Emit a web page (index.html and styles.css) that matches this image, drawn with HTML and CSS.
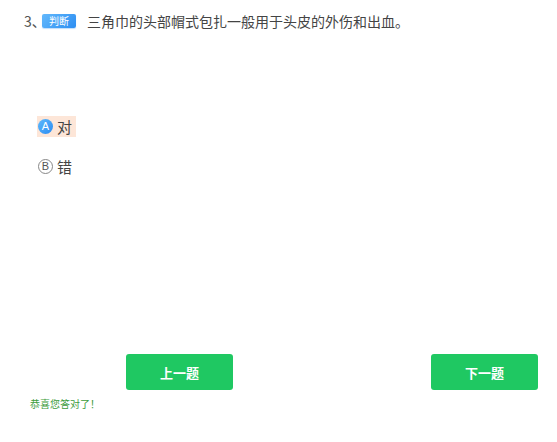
FILE: index.html
```html
<!DOCTYPE html>
<html lang="zh-CN">
<head>
    <meta charset="UTF-8">
    <meta name="viewport" content="width=device-width, initial-scale=1.0">
    <title>判断题</title>
    <link rel="stylesheet" href="styles.css">
</head>
<body>
    <div class="exam">
        <div class="question">
            <span class="num">3、</span>
            <span class="badge">判断</span>
            <span class="title">三角巾的头部帽式包扎一般用于头皮的外伤和出血。</span>
        </div>

        <div class="options">
            <div class="option selected">
                <span class="letter">A</span>
                <span class="label">对</span>
            </div>
            <div class="option">
                <span class="letter">B</span>
                <span class="label">错</span>
            </div>
        </div>

        <div class="nav">
            <button class="btn">上一题</button>
            <button class="btn">下一题</button>
        </div>

        <div class="result">恭喜您答对了！</div>
    </div>
</body>
</html>
```

FILE: styles.css
```css
body {
    margin: 0;
    padding: 0;
    background: #fff;
    color: #444;
    font-family: "Noto Sans CJK SC", "Noto Sans", sans-serif;
}

.exam {
    width: 557px;
}

.question {
    display: flex;
    align-items: center;
    padding: 11px 0 0 24px;
    height: 20px;
    font-size: 14px;
    line-height: 20px;
}

.num {
    color: #555;
    width: 18px;
}

.badge {
    width: 34px;
    height: 14px;
    line-height: 14px;
    margin-right: 11px;
    border-radius: 2px;
    background: linear-gradient(135deg, #62b8fc, #2d8ef2);
    box-shadow: 0 1px 1px rgba(45, 142, 242, 0.3);
    color: #fff;
    font-size: 10px;
    text-align: center;
}

.title {
    color: #444;
}

.options {
    margin-top: 85px;
    padding-left: 37px;
    display: flex;
    flex-direction: column;
    align-items: flex-start;
    gap: 19px;
}

.option {
    display: flex;
    align-items: center;
    gap: 4px;
    height: 21px;
    padding: 0 4px 0 1px;
    font-size: 15px;
    line-height: 21px;
}

.option.selected {
    background: #fde6d8;
}

.letter {
    box-sizing: border-box;
    width: 15px;
    height: 15px;
    border-radius: 50%;
    border: 1px solid #888;
    color: #555;
    font-family: "Liberation Sans", sans-serif;
    font-size: 11px;
    line-height: 13px;
    text-align: center;
}

.selected .letter {
    border: none;
    background: linear-gradient(135deg, #5fb9fc, #2b8cf2);
    color: #fff;
    line-height: 15px;
}

.label {
    color: #444;
}

.nav {
    display: flex;
    justify-content: space-between;
    margin-top: 177px;
    padding: 0 19px 0 126px;
}

.btn {
    width: 107px;
    height: 36px;
    border: none;
    border-radius: 3px;
    background: #1fc862;
    color: #fff;
    font-family: "Noto Sans CJK SC", sans-serif;
    font-size: 13px;
    font-weight: bold;
    cursor: pointer;
}

.result {
    margin-top: 7px;
    padding-left: 30px;
    font-size: 10px;
    line-height: 14px;
    color: #3c9c3c;
}
```
